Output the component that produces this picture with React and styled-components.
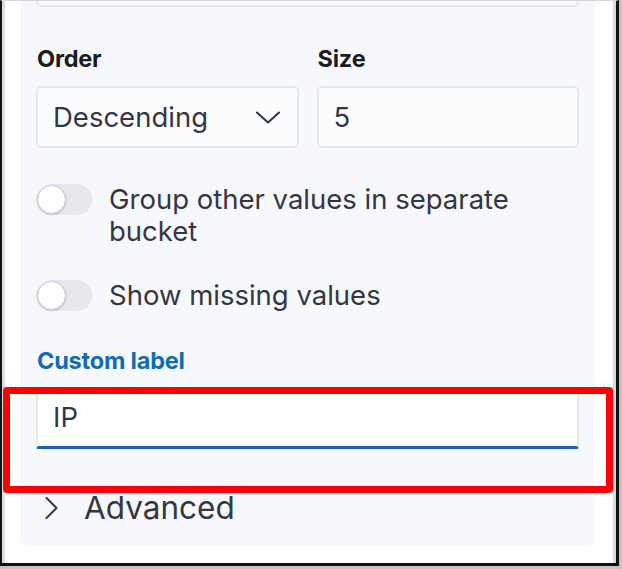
import React from "react";
import styled, { createGlobalStyle } from "styled-components";

const Global = createGlobalStyle`
  html, body { margin: 0; padding: 0; background: #ffffff; }
  body { font-family: Inter, "Noto Sans", sans-serif; -webkit-font-smoothing: antialiased; }
  * { box-sizing: border-box; }
`;

const Outer = styled.div`
  width: 622px;
  height: 569px;
  background: #c4c4c4;
  padding: 0 3px 3px 0;
`;

const Frame = styled.div`
  position: relative;
  width: 100%;
  height: 100%;
  border-left: 2px solid #111;
  border-right: 3px solid #111;
  border-bottom: 3px solid #111;
  border-top: 1px solid #d6d6d6;
  background: #fff;
  overflow: hidden;
`;

const Viewport = styled.div`
  height: 100%;
  padding: 0 0 17px 15px;
  border-left: 3px solid #dcdcdc;
  border-right: 3px solid #d7dbe6;
  display: flex;
  flex-direction: column;
  overflow: hidden;
`;

const Panel = styled.div`
  width: 575px;
  margin-top: -56px;
  flex: 1;
  background: #f7f8fc;
  border-radius: 0 0 8px 8px;
  padding: 0 16px;
  display: flex;
  flex-direction: column;
`;

const Stub = styled.div`
  height: 62px;
  border: 2px solid #e6e8f0;
  border-top: none;
  border-radius: 5px;
  background: #f9fafd;
`;

const Row = styled.div`
  display: flex;
  gap: 18px;
  margin-top: 40px;
`;

const Field = styled.div`
  flex: 1;
  display: flex;
  flex-direction: column;
`;

const Label = styled.div`
  font-size: 23.5px;
  font-weight: 700;
  line-height: 24px;
  letter-spacing: -0.2px;
  color: ${(p) => (p.$active ? "#0f6cb6" : "#1a1c21")};
  margin-bottom: 15px;
  padding-left: 1px;
`;

const Control = styled.div`
  height: 62px;
  border: 2px solid #e4e7ef;
  border-radius: 5px;
  background: #fbfcfe;
  display: flex;
  align-items: center;
  justify-content: space-between;
  padding: 0 17px 0 15px;
  font-size: 27.5px;
  color: #343741;
`;

const TextInput = styled.div`
  height: 62px;
  background: #ffffff;
  border-left: 2px solid #e6e8f0;
  border-right: 2px solid #e6e8f0;
  border-bottom: 3px solid #1565b0;
  border-radius: 3px 3px 2px 2px;
  display: flex;
  align-items: center;
  padding: 0 15px;
  font-size: 27.5px;
  color: #343741;
`;

const SwitchRow = styled.label`
  display: flex;
  align-items: flex-start;
  gap: 17px;
  margin-top: ${(p) => p.$mt}px;
  padding-left: 1px;
`;

const Track = styled.span`
  position: relative;
  flex: none;
  width: 55px;
  height: 31px;
  border-radius: 16px;
  background: #e6e8ee;
`;

const Knob = styled.span`
  position: absolute;
  left: 0;
  top: 1px;
  width: 29px;
  height: 29px;
  border-radius: 50%;
  background: #fff;
  border: 1px solid #c3c7cf;
  box-shadow: 0 1px 2px rgba(0, 0, 0, 0.18);
`;

const SwitchText = styled.span`
  font-size: 27.5px;
  line-height: 32px;
  color: #343741;
  margin-top: -1px;
`;

const Advanced = styled.div`
  display: flex;
  align-items: center;
  gap: 26px;
  margin-top: 39px;
  padding-left: 9px;
  font-size: 31.5px;
  color: #343741;
`;

const Highlight = styled.div`
  position: absolute;
  left: 1px;
  top: 386px;
  width: 610px;
  height: 106px;
  border: 7px solid #ff0000;
  border-radius: 4px;
  pointer-events: none;
`;

const ChevronDown = () => (
  <svg width="24" height="13" viewBox="0 0 24 13" fill="none">
    <path d="M1 1.5 L12 11.5 L23 1.5" stroke="#343741" strokeWidth="2" strokeLinecap="round" strokeLinejoin="round" />
  </svg>
);

const ChevronRight = () => (
  <svg width="13" height="22" viewBox="0 0 13 22" fill="none">
    <path d="M1.5 1 L11.5 11 L1.5 21" stroke="#343741" strokeWidth="2" strokeLinecap="round" strokeLinejoin="round" />
  </svg>
);

const Switch = ({ children, mt }) => (
  <SwitchRow $mt={mt}>
    <Track>
      <Knob />
    </Track>
    <SwitchText>{children}</SwitchText>
  </SwitchRow>
);

export default function App() {
  return (
    <>
      <Global />
      <Outer>
        <Frame>
          <Viewport>
            <Panel>
              <Stub />
              <Row>
                <Field>
                  <Label>Order</Label>
                  <Control>
                    <span>Descending</span>
                    <ChevronDown />
                  </Control>
                </Field>
                <Field>
                  <Label>Size</Label>
                  <Control>
                    <span>5</span>
                  </Control>
                </Field>
              </Row>
              <Switch mt={36}>
                Group other values in separate
                <br />
                bucket
              </Switch>
              <Switch mt={33}>Show missing values</Switch>
              <Label $active style={{ marginTop: 38, marginBottom: 14 }}>Custom label</Label>
              <TextInput>IP</TextInput>
              <Advanced>
                <ChevronRight />
                <span>Advanced</span>
              </Advanced>
            </Panel>
          </Viewport>
          <Highlight />
        </Frame>
      </Outer>
    </>
  );
}
